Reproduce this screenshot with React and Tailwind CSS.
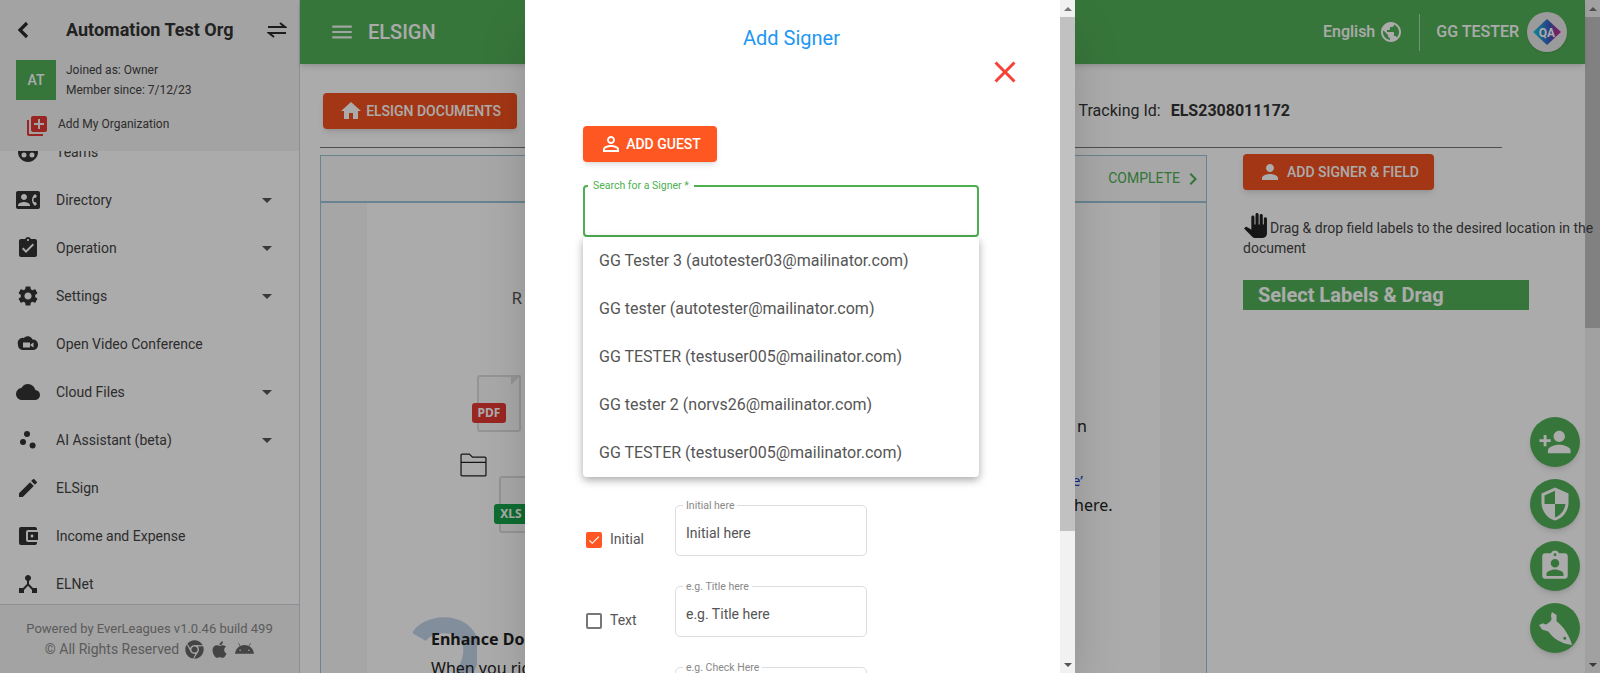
import React from 'react';
import {
  MdLibraryAdd, MdGroupWork, MdContactPhone, MdAssignmentTurnedIn,
  MdSettings, MdCloud, MdScatterPlot, MdEdit, MdAccountBalanceWallet, MdDeviceHub, MdArrowDropDown,
  MdMenu, MdHome, MdPublic, MdPerson, MdPersonOutline, MdClose, MdPanTool, MdPersonAdd, MdSecurity,
  MdAssignmentInd, MdCheck, MdChevronRight,
} from 'react-icons/md';
import { FaChrome, FaApple, FaAndroid } from 'react-icons/fa';

const VideoCloud = ({ className }) => (
  <svg viewBox="0 0 24 24" className={className} fill="currentColor">
    <path d="M8 6a5 5 0 0 1 8.5 1.5A5 5 0 0 1 22 12.5 5 5 0 0 1 17.500 18h-11A5 5 0 0 1 2 12.500 5 5 0 0 1 8 6z" />
    <path d="M7 10.500h7v5H7zM14.500 12.500l3-2v5l-3-2z" fill="#fff" />
  </svg>
);

const menuItems = [
  { label: 'Teams', Icon: MdGroupWork },
  { label: 'Directory', Icon: MdContactPhone, arrow: true },
  { label: 'Operation', Icon: MdAssignmentTurnedIn, arrow: true },
  { label: 'Settings', Icon: MdSettings, arrow: true },
  { label: 'Open Video Conference', Icon: VideoCloud },
  { label: 'Cloud Files', Icon: MdCloud, arrow: true },
  { label: 'AI Assistant (beta)', Icon: MdScatterPlot, arrow: true },
  { label: 'ELSign', Icon: MdEdit },
  { label: 'Income and Expense', Icon: MdAccountBalanceWallet },
  { label: 'ELNet', Icon: MdDeviceHub },
];

const signers = [
  'GG Tester 3 (autotester03@mailinator.com)',
  'GG tester (autotester@mailinator.com)',
  'GG TESTER (testuser005@mailinator.com)',
  'GG tester 2 (norvs26@mailinator.com)',
  'GG TESTER (testuser005@mailinator.com)',
];

function Sidebar() {
  return (
    <aside className="w-[300px] shrink-0 h-full flex flex-col bg-white border-r border-gray-300 text-[#3a3a3a]">
      <div className="relative z-10 h-[151px] shrink-0 bg-[#f3f3f3] pt-[15px]">
        <div className="flex items-center h-[30px] pl-[17px] pr-[12px]">
          <svg viewBox="0 0 12 18" className="w-[12px] h-[18px] shrink-0" fill="none" stroke="#2a2a2a" strokeWidth="3.2">
            <path d="M10 2L3 9l7 7" />
          </svg>
          <span className="ml-[37px] text-[18px] leading-[28px] font-bold text-[#333] flex-1">Automation Test Org</span>
          <svg viewBox="0 0 20 18" className="w-[20px] h-[18px]" fill="none" stroke="#2a2a2a" strokeWidth="2">
            <path d="M1 6h17l-5-4M19 12H2l5 4" />
          </svg>
        </div>
        <div className="flex items-center mt-[15px] ml-[16px]">
          <div className="w-[40px] h-[40px] bg-[#53b158] text-white font-medium text-[14px] flex items-center justify-center">AT</div>
          <div className="ml-[10px] text-[12px] leading-[20px] text-[#444]">
            <div>Joined as: Owner</div>
            <div>Member since: 7/12/23</div>
          </div>
        </div>
        <div className="flex items-center mt-[14px] ml-[25px]">
          <MdLibraryAdd className="w-[24px] h-[24px] text-[#e53935]" />
          <span className="ml-[9px] text-[12px] text-[#444] -mt-[4px]">Add My Organization</span>
        </div>
      </div>
      <div className="flex-1 overflow-hidden -mt-[23px]">
        {menuItems.map(({ label, Icon, arrow }) => (
          <div key={label} className="flex items-center h-[48px] pl-[16px] pr-[20px]">
            <Icon className="w-[24px] h-[24px] text-[#333] shrink-0" />
            <span className="ml-[16px] flex-1 text-[14px] text-[#444]">{label}</span>
            {arrow && <MdArrowDropDown className="w-[24px] h-[24px] text-[#555]" />}
          </div>
        ))}
      </div>
      <div className="h-[69px] shrink-0 bg-[#f3f3f3] border-t border-gray-300 pt-[14px] text-center text-[13px] leading-[20px] text-[#888]">
        <div>Powered by EverLeagues v1.0.46 build 499</div>
        <div className="flex items-center justify-center gap-[6px] text-[14px]">
          <span>© All Rights Reserved</span>
          <FaChrome className="w-[19px] h-[19px] text-[#666]" />
          <FaApple className="w-[19px] h-[19px] text-[#666]" />
          <FaAndroid className="w-[19px] h-[19px] text-[#666]" />
        </div>
      </div>
    </aside>
  );
}

function Header() {
  return (
    <header className="h-[64px] shrink-0 bg-[#53b158] text-white flex items-center pl-[29px] pr-[18px] shadow-md relative z-10">
      <MdMenu className="w-[26px] h-[26px] opacity-90" />
      <span className="ml-[13px] text-[20px] font-medium flex-1">ELSIGN</span>
      <span className="text-[16px] font-medium">English</span>
      <MdPublic className="ml-[4px] w-[24px] h-[24px]" />
      <div className="ml-[16px] w-px h-[37px] bg-white/50" />
      <span className="ml-[16px] text-[16px] font-medium">GG TESTER</span>
      <div className="ml-[8px] w-[40px] h-[40px] rounded-full bg-[#e8e8e8] shadow flex items-center justify-center">
        <svg viewBox="0 0 32 32" className="w-[32px] h-[32px]">
          <defs>
            <linearGradient id="qa" x1="0" y1="0" x2="1" y2="0">
              <stop offset="0" stopColor="#1ec8e0" />
              <stop offset="0.6" stopColor="#3b5bc0" />
              <stop offset="1" stopColor="#e5188c" />
            </linearGradient>
          </defs>
          <path d="M16 3l14 13-14 13L2 16z" fill="url(#qa)" />
          <text x="16" y="20.500" textAnchor="middle" fontSize="12" fontWeight="700" fill="#fff" fontFamily="Roboto, sans-serif">QA</text>
        </svg>
      </div>
    </header>
  );
}

function FileBadge({ label, color, className }) {
  return (
    <div className={`relative shrink-0 w-[44px] h-[57px] border-2 border-[#ddd] rounded-[3px] bg-[#fbfbfb] ${className}`}>
      <span className="absolute right-[-2px] top-[-2px] border-l-[10px] border-l-[#ddd] border-b-[10px] border-b-transparent" />
      <span className={`absolute left-[-7px] top-[26px] w-[34px] h-[20px] rounded-[3px] text-white font-['Noto_Sans',sans-serif] font-bold text-[12px] flex items-center justify-center ${color}`}>{label}</span>
    </div>
  );
}

function MainArea() {
  return (
    <main className="relative flex-1 min-w-0 h-full flex flex-col bg-white">
      <Header />
      <div className="px-[20px] flex-1 min-h-0 flex flex-col">
        <div className="flex items-center justify-between h-[83px] shrink-0 pt-[11px]">
          <button className="h-[36px] w-[194px] ml-[3px] rounded bg-[#f4511e] text-white text-[14px] font-medium shadow-md flex items-center justify-center gap-[3px]">
            <MdHome className="w-[24px] h-[24px]" />
            ELSIGN DOCUMENTS
          </button>
          <div className="mr-[275px] text-[16px] text-[#333]">
            Tracking Id:<b className="ml-[10px] font-bold">ELS2308011172</b>
          </div>
        </div>
        <div className="w-[1182px] h-px bg-[#777] shrink-0" />
        <div className="flex flex-1 min-h-0 mt-[7px]">
          <section className="w-[887px] shrink-0 border border-[#9cc5d8] border-b-0 flex flex-col bg-[#f8f8f8]">
            <div className="h-[47px] shrink-0 border-b-2 border-[#9cc5d8] flex items-center justify-end pr-[1px] bg-[#fafafa] text-[#4caf50] text-[14px]">
              COMPLETE
              <MdChevronRight className="ml-[1px] w-[24px] h-[24px]" />
            </div>
            <div className="flex-1 min-h-0 flex ml-[46px] mr-[46px] bg-[#fff] text-[#222] font-['Noto_Sans',sans-serif]">
              <div className="relative w-[158px] shrink-0 flex flex-col">
                <svg viewBox="0 0 64 80" className="absolute left-[46px] top-[412px] w-[64px] h-[80px]" fill="none" stroke="#c3d4ea" strokeWidth="16">
                  <path d="M6 22C14 8 46 4 56 24c8 18-6 36-14 54" />
                </svg>
                <span className="shrink-0 self-end text-[17px] leading-[22px] mt-[84px] mr-[3px] text-[#555]">R</span>
                <FileBadge label="PDF" color="bg-[#e53935]" className="self-end mt-[66px] mr-[4px]" />
                <svg viewBox="0 0 26 24" className="shrink-0 w-[27px] h-[25px] mt-[20px] ml-[93px]" fill="none" stroke="#222" strokeWidth="1.200">
                  <path d="M1 3a1 1 0 0 1 1-1h7l3 3h12a1 1 0 0 1 1 1v16a1 1 0 0 1-1 1H2a1 1 0 0 1-1-1zM1 10h24" />
                </svg>
                <FileBadge label="XLS" color="bg-[#16a34a]" className="-mt-[1px] ml-[132px] self-start" />
                <div className="relative shrink-0 ml-[64px] mt-[94px] whitespace-nowrap text-[16px]">
                  <div className="font-bold leading-[24px]">Enhance Document</div>
                  <div className="mt-[5px] leading-[24px]">When you right</div>
                </div>
              </div>
              <div className="w-[550px] shrink-0 relative z-0" />
              <div className="flex-1 min-w-0 text-[16px] pl-[2px]">
                <div className="mt-[211px] leading-[24px]">n</div>
                <div className="mt-[30px] -ml-[5px] leading-[24px] text-[#1d3ed8] text-[15px]">e’</div>
                <div className="mt-[1px] -ml-[3px] leading-[24px]">here.</div>
              </div>
            </div>
          </section>
          <div className="flex-1 min-w-0 pl-[36px] relative">
            <button className="h-[36px] w-[191px] rounded bg-[#f4511e] text-white text-[14px] font-medium shadow-md flex items-center justify-center gap-[5px] -mt-[1px]">
              <MdPerson className="w-[24px] h-[24px]" />
              ADD SIGNER &amp; FIELD
            </button>
            <p className="mt-[28px] text-[14px] leading-[20px] text-[#444] w-[354px]">
              <MdPanTool className="inline w-[25px] h-[25px] text-[#222] mr-[2px] -mt-[8px]" />
              Drag &amp; drop field labels to the desired location in the document
            </p>
            <div className="mt-[22px] w-[286px] h-[30px] bg-[#53b158] text-white font-bold text-[20px] leading-[30px] pl-[15px]">
              Select Labels &amp; Drag
            </div>
          </div>
        </div>
      </div>
      {/* floating action buttons */}
      <div className="absolute right-[5px] bottom-[20px] flex flex-col gap-[12px] text-white">
        <div className="w-[50px] h-[50px] rounded-full bg-[#53b158] shadow-md flex items-center justify-center"><MdPersonAdd className="w-[34px] h-[34px]" /></div>
        <div className="w-[50px] h-[50px] rounded-full bg-[#53b158] shadow-md flex items-center justify-center"><MdSecurity className="w-[36px] h-[36px]" /></div>
        <div className="w-[50px] h-[50px] rounded-full bg-[#53b158] shadow-md flex items-center justify-center"><MdAssignmentInd className="w-[34px] h-[34px]" /></div>
        <div className="w-[50px] h-[50px] rounded-full bg-[#53b158] shadow-md flex items-center justify-center">
          <svg viewBox="0 0 32 32" className="w-[33px] h-[33px]" fill="currentColor">
            <path fillRule="evenodd" d="M12.500 0L17 3l0 6C24 14 30 24 32 32 22 31 14 26 9 19L3 17 0 12.500 4 11C6 13 8 12 10 10 12 8 13 6 11.500 4z M25 24a1.500 1.500 0 1 0 0 3 1.500 1.500 0 0 0 0-3z" />
          </svg>
        </div>
      </div>
    </main>
  );
}

function ScrollBar({ thumb, bg, thumbBg }) {
  return (
    <div className={`w-[15px] h-full shrink-0 flex flex-col ${bg}`}>
      <div className="h-[17px] flex items-center justify-center text-[#555]">
        <div className="border-x-[4px] border-x-transparent border-b-[4px] border-b-[#777]" />
      </div>
      <div className={`${thumb} ${thumbBg}`} />
      <div className="flex-1" />
      <div className="h-[17px] flex items-center justify-center">
        <div className="border-x-[4px] border-x-transparent border-t-[4px] border-t-[#555]" />
      </div>
    </div>
  );
}

function FieldRow({ checked, name, placeholder, className }) {
  return (
    <div className={`flex items-center ${className}`}>
      <div className="w-[92px] pl-[3px] flex items-center pt-[18px]">
        {checked ? (
          <span className="w-[16px] h-[16px] rounded-[2px] bg-[#ff5722] flex items-center justify-center">
            <MdCheck className="w-[14px] h-[14px] text-white" />
          </span>
        ) : (
          <span className="w-[16px] h-[16px] rounded-[2px] border-2 border-[#777]" />
        )}
        <span className="ml-[8px] text-[14px] text-[#555]">{name}</span>
      </div>
      <div className="relative w-[192px] h-[51px] rounded-[5px] border border-[#ddd] flex items-center pl-[10px] pt-[6px] text-[14px] text-[#555]">
        <span className="absolute left-[7px] -top-[7px] px-[3px] bg-white text-[10.500px] leading-[14px] text-[#888]">{placeholder}</span>
        {placeholder}
      </div>
    </div>
  );
}

function SignerModal() {
  return (
    <div className="absolute left-[525px] top-0 w-[550px] h-full bg-white shadow-2xl flex z-30">
      <div className="flex-1 min-w-0 h-full overflow-hidden pl-[58px] flex flex-col">
        <h2 className="h-[76px] -ml-[60px] pt-[24px] text-center text-[20px] leading-[28px] text-[#2196f3] shrink-0">Add Signer</h2>
        <div className="flex justify-end pr-[37px] -mt-[22px] shrink-0">
          <MdClose className="w-[36px] h-[36px] text-[#f44336]" />
        </div>
        <button className="mt-[36px] h-[36px] w-[134px] shrink-0 rounded bg-[#ff5722] text-white text-[14px] font-medium shadow-md flex items-center justify-center gap-[3px]">
          <MdPersonOutline className="w-[24px] h-[24px]" />
          ADD GUEST
        </button>
        <div className="relative mt-[23px] w-[396px] h-[52px] shrink-0 rounded-[4px] border-2 border-[#4caf50]">
          <span className="absolute left-[3px] -top-[8px] px-[5px] bg-white text-[10.500px] leading-[14px] text-[#4caf50]">Search for a Signer *</span>
          <div className="absolute left-[-2px] top-[50px] w-[396px] h-[240px] rounded-[4px] bg-white shadow-[0_3px_8px_rgba(0,0,0,0.35)] z-10">
            {signers.map((s, i) => (
              <div key={i} className="h-[48px] flex items-center pl-[16px] text-[16px] text-[#555]">{s}</div>
            ))}
          </div>
        </div>
        <FieldRow checked name="Initial" placeholder="Initial here" className="mt-[268px] shrink-0" />
        <FieldRow name="Text" placeholder="e.g. Title here" className="mt-[30px] shrink-0" />
        <FieldRow name="Check" placeholder="e.g. Check Here" className="mt-[30px] shrink-0" />
      </div>
      <ScrollBar bg="bg-[#f1f1f1]" thumb="h-[514px]" thumbBg="bg-[#c1c1c1]" />
    </div>
  );
}

export default function App() {
  return (
    <div className="relative w-full h-screen overflow-hidden flex font-['Roboto',sans-serif]">
      <Sidebar />
      <MainArea />
      <ScrollBar bg="bg-[#f1f1f1]" thumb="h-[311px]" thumbBg="bg-[#c1c1c1]" />
      <div className="absolute inset-0 bg-black/[.33] z-20" />
      <SignerModal />
    </div>
  );
}
